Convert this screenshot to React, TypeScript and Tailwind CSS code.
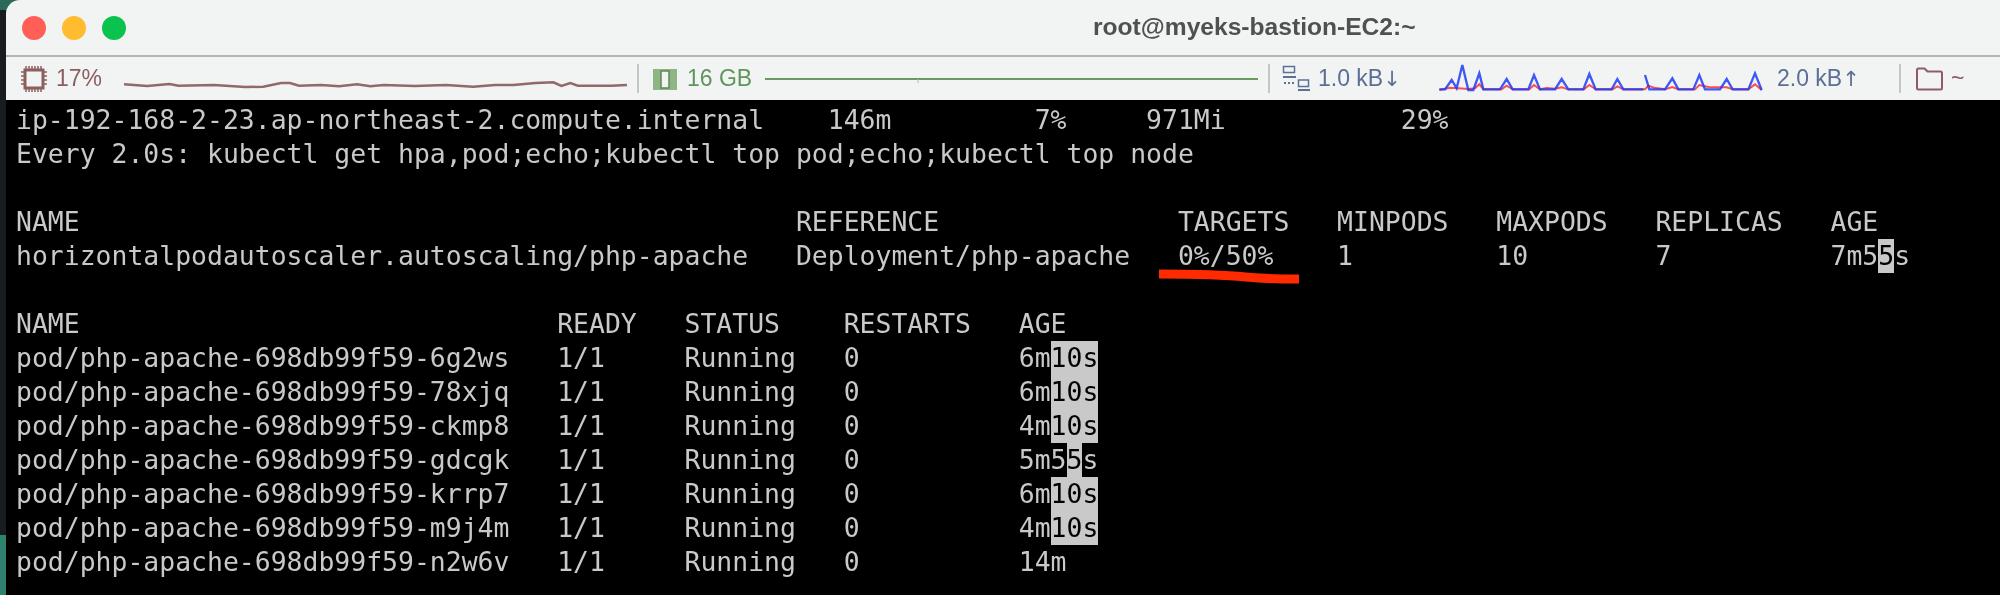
const lines: { t: string; hl?: [number, number] }[] = [
  { t: "ip-192-168-2-23.ap-northeast-2.compute.internal    146m         7%     971Mi           29%" },
  { t: "Every 2.0s: kubectl get hpa,pod;echo;kubectl top pod;echo;kubectl top node" },
  { t: " " },
  { t: "NAME                                             REFERENCE               TARGETS   MINPODS   MAXPODS   REPLICAS   AGE" },
  { t: "horizontalpodautoscaler.autoscaling/php-apache   Deployment/php-apache   0%/50%    1         10        7          7m55s", hl: [117, 118] },
  { t: " " },
  { t: "NAME                              READY   STATUS    RESTARTS   AGE" },
  { t: "pod/php-apache-698db99f59-6g2ws   1/1     Running   0          6m10s", hl: [65, 68] },
  { t: "pod/php-apache-698db99f59-78xjq   1/1     Running   0          6m10s", hl: [65, 68] },
  { t: "pod/php-apache-698db99f59-ckmp8   1/1     Running   0          4m10s", hl: [65, 68] },
  { t: "pod/php-apache-698db99f59-gdcgk   1/1     Running   0          5m55s", hl: [66, 67] },
  { t: "pod/php-apache-698db99f59-krrp7   1/1     Running   0          6m10s", hl: [65, 68] },
  { t: "pod/php-apache-698db99f59-m9j4m   1/1     Running   0          4m10s", hl: [65, 68] },
  { t: "pod/php-apache-698db99f59-n2w6v   1/1     Running   0          14m" },
];

const cpuPts =
  "278,88 330,93 380,87 400,92 480,90 550,96 590,95 630,84 650,84 670,92 720,90 760,94 800,88 830,94 860,90 930,93 1000,90 1060,95 1110,90 1150,90 1200,84 1240,82 1258,93 1278,84 1295,92 1370,92 1405,90";
const netBlueA =
  "28,103 45,103 65,75 80,100 97,30 115,105 130,105 148,55 160,103 210,103 230,72 248,103 295,103 312,60 330,103 375,103 395,72 415,103 460,103 478,57 497,103 545,103 562,72 580,103 640,103";
const netBlueB =
  "645,60 658,103 705,103 727,70 745,103 790,103 808,60 825,103 870,103 890,72 908,103 955,103 975,55 995,105";
const netRed =
  "28,105 60,98 85,100 115,102 135,100 148,88 160,103 215,103 230,92 248,103 298,103 312,90 330,103 350,99 375,101 395,97 415,103 462,103 478,90 497,103 548,103 562,94 580,103 645,103 655,92 672,98 705,103 727,96 745,103 795,103 808,90 835,96 870,97 890,97 908,103 955,103 975,88 995,105";

function Sep({ className }: { className: string }) {
  return <div className={`w-[2px] h-[29px] bg-[#c3c6c6] shrink-0 ${className}`} />;
}

function Arrow({ c }: { c: string }) {
  return <span className="font-['DejaVu_Sans',sans-serif] text-[21px]">{c}</span>;
}

export default function App() {
  return (
    <div className="w-[2000px] h-[595px] overflow-hidden flex bg-black blur-[0.6px]">
      <div className="w-[6px] shrink-0 flex flex-col">
        <div className="h-[10px] bg-[#2b6a59]" />
        <div className="flex-1 bg-[#181c1e]" />
        <div className="h-[60px] bg-[#2f8270]" />
      </div>
      <div className="relative flex-1 flex flex-col bg-[#2b6a59]">
        <div className="h-[57px] shrink-0 bg-[#f2f4f4] rounded-tl-[14px] flex items-center border-b-2 border-[#b4b6b6]">
          <span className="ml-[16px] w-[24px] h-[24px] rounded-full bg-[#ff5f57]" />
          <span className="ml-[16px] w-[24px] h-[24px] rounded-full bg-[#febc2e]" />
          <span className="ml-[16px] w-[24px] h-[24px] rounded-full bg-[#0ac24e]" />
          <span className="ml-[967px] text-[24.6px] font-bold text-[#505050] font-['Liberation_Sans',sans-serif] whitespace-pre">
            root@myeks-bastion-EC2:~
          </span>
        </div>
        <div className="h-[43px] shrink-0 bg-[#f2f4f4] flex items-center text-[23px] font-['Liberation_Sans',sans-serif] whitespace-pre">
          <svg className="ml-[15px] shrink-0" width="26" height="26" viewBox="0 0 26 26" fill="none" stroke="#8a5f5f">
            <rect x="4" y="4" width="18" height="18" strokeWidth="3" />
            <path d="M5 0v3M8 0v3M11 0v3M14 0v3M17 0v3M20 0v3M5 23v3M8 23v3M11 23v3M14 23v3M17 23v3M20 23v3" strokeWidth="1.5" />
            <path d="M0 6h3M0 10h3M0 14h3M0 18h3M23 6h3M23 10h3M23 14h3M23 18h3" strokeWidth="1.5" />
          </svg>
          <span className="ml-[9px] w-[46px] text-[#8a5f5f]">17%</span>
          <svg className="ml-[22px] shrink-0" width="503" height="41" viewBox="278 9 1127 123" preserveAspectRatio="none" fill="none">
            <polyline points={cpuPts} stroke="#92686a" strokeWidth="2.5" vectorEffect="non-scaling-stroke" />
          </svg>
          <Sep className="ml-[10px]" />
          <svg className="ml-[14px] shrink-0" width="24" height="24" viewBox="0 0 24 24" fill="none">
            <rect x="0" y="2" width="24" height="21" fill="#8fb585" />
            <rect x="8" y="4" width="8" height="17" fill="#f2f4f4" stroke="#5c8a55" strokeWidth="1.5" />
          </svg>
          <span className="ml-[10px] w-[66px] text-[#5f955a]">16 GB</span>
          <svg className="ml-[12px] shrink-0" width="493" height="41" viewBox="0 0 493 41" fill="none">
            <path d="M0 21h493" stroke="#6b9a5e" strokeWidth="2" />
            <path d="M153 21v4" stroke="#a9c2a2" strokeWidth="1" />
          </svg>
          <Sep className="ml-[10px]" />
          <svg className="ml-[12px] shrink-0" width="28" height="30" viewBox="0 0 28 30" fill="none" stroke="#5d7196">
            <rect x="1.500" y="2.500" width="11" height="6" strokeWidth="1.500" />
            <path d="M1 13h13" strokeWidth="2" />
            <rect x="16.500" y="16" width="10" height="6.500" strokeWidth="1.500" />
            <path d="M16 26h12" strokeWidth="2" />
            <path d="M2 19h12" strokeWidth="2" strokeDasharray="2 2" />
          </svg>
          <span className="ml-[8px] w-[84px] text-[#5a6f93]">
            1.0 kB<Arrow c="↓" />
          </span>
          <svg className="ml-[28px] shrink-0" width="350" height="41" viewBox="0 9 1050 123" fill="none">
            <polyline points={netRed} stroke="#ff4d55" strokeWidth="6" />
            <polyline points={netBlueA} stroke="#1f3cf5" strokeWidth="7" strokeOpacity="0.85" />
            <polyline points={netBlueB} stroke="#1f3cf5" strokeWidth="7" strokeOpacity="0.85" />
          </svg>
          <span className="ml-[-3px] w-[86px] text-[#5a6f93]">
            2.0 kB<Arrow c="↑" />
          </span>
          <Sep className="ml-[36px]" />
          <svg className="ml-[14px] shrink-0" width="28" height="24" viewBox="0 0 28 24" fill="none" stroke="#8f5a70" strokeWidth="2">
            <path d="M2 3a1.500 1.500 0 0 1 1.500-1.500h6l3 3h13a1.500 1.500 0 0 1 1.500 1.500v15a1.500 1.500 0 0 1-1.500 1.500h-22a1.500 1.500 0 0 1-1.500-1.500z" />
          </svg>
          <span className="ml-[8px] text-[#8f5a70]">~</span>
        </div>
        <div className="flex-1 bg-black pt-[3px] pl-[10px] font-['DejaVu_Sans_Mono',monospace] text-[26.45px] leading-[34px] text-[#c9c9c9] whitespace-pre">
          {lines.map((l, i) =>
            l.hl ? (
              <div key={i} className="h-[34px]">
                {l.t.slice(0, l.hl[0])}
                <span className="inline-block h-[34px] align-top bg-[#c9c9c9] text-black">{l.t.slice(l.hl[0], l.hl[1])}</span>
                {l.t.slice(l.hl[1])}
              </div>
            ) : (
              <div key={i} className="h-[34px]">
                {l.t}
              </div>
            ),
          )}
        </div>
        <svg className="absolute left-[1150px] top-[265px]" width="150" height="24" viewBox="0 0 150 24" fill="none">
          <path d="M3 9 C40 9 70 10 90 12 S125 14 143 14" stroke="#ff2a00" strokeWidth="9" />
        </svg>
      </div>
    </div>
  );
}
